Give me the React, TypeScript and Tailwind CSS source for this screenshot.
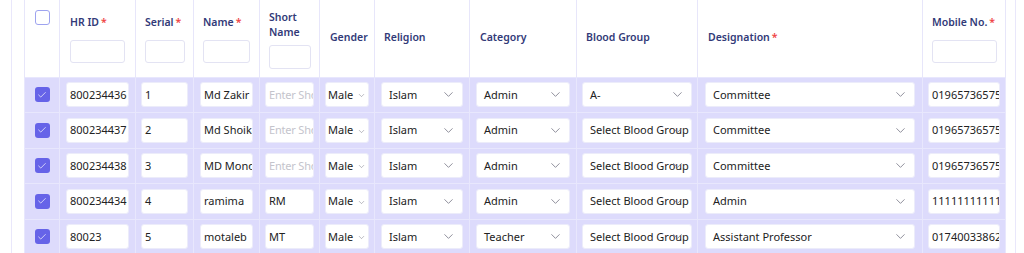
import { ChevronDown, Check } from 'lucide-react'

type Row = {
  hrId: string
  serial: string
  name: string
  shortName: string
  gender: string
  religion: string
  category: string
  blood: string
  designation: string
  mobile: string
}

const rows: Row[] = [
  { hrId: '800234436', serial: '1', name: 'Md Zakir', shortName: '', gender: 'Male', religion: 'Islam', category: 'Admin', blood: 'A-', designation: 'Committee', mobile: '01965736575' },
  { hrId: '800234437', serial: '2', name: 'Md Shoikat', shortName: '', gender: 'Male', religion: 'Islam', category: 'Admin', blood: 'Select Blood Group', designation: 'Committee', mobile: '01965736575' },
  { hrId: '800234438', serial: '3', name: 'MD Monowar', shortName: '', gender: 'Male', religion: 'Islam', category: 'Admin', blood: 'Select Blood Group', designation: 'Committee', mobile: '01965736575' },
  { hrId: '800234434', serial: '4', name: 'ramima', shortName: 'RM', gender: 'Male', religion: 'Islam', category: 'Admin', blood: 'Select Blood Group', designation: 'Admin', mobile: '11111111111' },
  { hrId: '80023', serial: '5', name: 'motaleb', shortName: 'MT', gender: 'Male', religion: 'Islam', category: 'Teacher', blood: 'Select Blood Group', designation: 'Assistant Professor', mobile: '01740033862' },
]

const cols = [35, 76, 58, 66, 60, 55, 95, 107, 121, 225, 83]

function Req() {
  return <span className="text-[#ef4444] ml-0.5">*</span>
}

function HeadInput({ w }: { w: string }) {
  return <div className={`${w} h-[23px] mt-[9px] bg-white border border-[#e3e3f3] rounded-[3px]`} />
}

function CellInput({ value, placeholder }: { value: string; placeholder?: string }) {
  return (
    <div className="h-[25px] bg-white border border-[#ececfa] rounded-[3px] pl-[3px] flex items-center overflow-hidden whitespace-nowrap">
      {value ? (
        <span className="text-[#222]">{value}</span>
      ) : (
        <span className="text-[#c4c4cc] tracking-[-0.2px]">{placeholder}</span>
      )}
    </div>
  )
}

function CellSelect({ value, tight }: { value: string; tight?: boolean }) {
  return (
    <div
      className={`h-[25px] bg-white border border-[#ececfa] rounded-[3px] flex items-center relative overflow-hidden whitespace-nowrap ${
        tight ? 'pl-[2px]' : 'pl-[7px]'
      }`}
    >
      <span className="text-[#222]">{value}</span>
      <ChevronDown
        size={tight ? 9 : 15}
        strokeWidth={1.2}
        className={`absolute text-[#6b6b7b] ${tight ? 'right-[2px] top-[8px]' : 'right-[6px] top-[4px]'}`}
      />
    </div>
  )
}

export default function App() {
  return (
    <main className="w-[1024px] h-[253px] overflow-hidden bg-white font-['Noto_Sans',sans-serif] flex">
      <div className="w-[11px] shrink-0" />
      <div className="w-px shrink-0 bg-[#e9e7fb]" />
      <div className="w-[12px] shrink-0" />
      <div className="w-[981px] shrink-0">
        <table className="table-fixed border-collapse w-[981px]">
          <colgroup>
            {cols.map((w, i) => (
              <col key={i} style={{ width: w }} />
            ))}
          </colgroup>
          <thead>
            <tr className="h-[77px] text-[10.5px] font-semibold text-[#323a78] text-left">
              <th className="border-l border-r border-[#e7e6fa] align-top pt-[10px]">
                <div className="w-[15px] h-[15px] mx-auto border-[1.5px] border-[#9ea3ef] rounded-[3px] bg-white" />
              </th>
              <th className="border-r border-[#e7e6fa] px-[10px] align-middle font-semibold">
                <div className="mt-[2px]">HR ID<Req /></div>
                <HeadInput w="w-[55px]" />
              </th>
              <th className="border-r border-[#e7e6fa] px-[9px] align-middle font-semibold">
                <div className="mt-[2px]">Serial<Req /></div>
                <HeadInput w="w-[40px]" />
              </th>
              <th className="border-r border-[#e7e6fa] px-[9px] align-middle font-semibold">
                <div className="mt-[2px]">Name<Req /></div>
                <HeadInput w="w-[47px]" />
              </th>
              <th className="border-r border-[#e7e6fa] px-[9px] align-middle font-semibold">
                <div className="leading-[15px] mt-[3px]">Short<br />Name</div>
                <div className="w-[42px] h-[24px] mt-[5px] bg-white border border-[#e3e3f3] rounded-[3px]" />
              </th>
              <th className="border-r border-[#e7e6fa] px-[10px] align-middle font-semibold">Gender</th>
              <th className="border-r border-[#e7e6fa] px-[9px] align-middle font-semibold">Religion</th>
              <th className="border-r border-[#e7e6fa] px-[10px] align-middle font-semibold">Category</th>
              <th className="border-r border-[#e7e6fa] px-[9px] align-middle font-semibold">Blood Group</th>
              <th className="border-r border-[#e7e6fa] px-[10px] align-middle font-semibold">
                Designation<Req />
              </th>
              <th className="border-r border-[#e7e6fa] px-[9px] align-middle font-semibold">
                <div className="mt-[2px]">Mobile No.<Req /></div>
                <HeadInput w="w-[65px]" />
              </th>
            </tr>
          </thead>
          <tbody className="text-[11px]">
            {rows.map((r) => (
              <tr key={r.hrId} className="h-[35.5px] bg-[#dddbfc]">
                <td className="border border-[#e8e7fd] align-middle">
                  <div className="w-[15px] h-[15px] mx-auto rounded-[3px] bg-[#6663e8] flex items-center justify-center">
                    <Check size={10} strokeWidth={2} className="text-[#e4e4fb]" />
                  </div>
                </td>
                <td className="border border-[#e8e7fd] px-[6px]">
                  <CellInput value={r.hrId} />
                </td>
                <td className="border border-[#e8e7fd] px-[5px]">
                  <CellInput value={r.serial} />
                </td>
                <td className="border border-[#e8e7fd] px-[6px]">
                  <CellInput value={r.name} />
                </td>
                <td className="border border-[#e8e7fd] px-[5px]">
                  <CellInput value={r.shortName} placeholder="Enter Short Name" />
                </td>
                <td className="border border-[#e8e7fd] px-[5px]">
                  <CellSelect value={r.gender} tight />
                </td>
                <td className="border border-[#e8e7fd] px-[6px]">
                  <CellSelect value={r.religion} />
                </td>
                <td className="border border-[#e8e7fd] px-[6px]">
                  <CellSelect value={r.category} />
                </td>
                <td className="border border-[#e8e7fd] px-[5px]">
                  <CellSelect value={r.blood} />
                </td>
                <td className="border border-[#e8e7fd] px-[7px]">
                  <CellSelect value={r.designation} />
                </td>
                <td className="border border-[#e8e7fd] px-[5px]">
                  <CellInput value={r.mobile} />
                </td>
              </tr>
            ))}
          </tbody>
        </table>
      </div>
      <div className="w-[10px] shrink-0" />
      <div className="w-px shrink-0 bg-[#e9e7fb]" />
    </main>
  )
}
